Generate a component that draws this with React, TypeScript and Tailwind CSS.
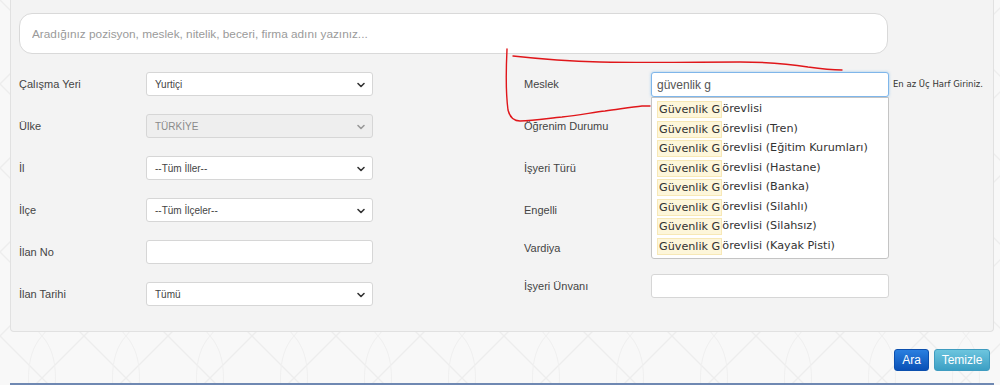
import { ChevronDown } from "lucide-react";

const leftRows = [
  { label: "Çalışma Yeri", value: "Yurtiçi", kind: "select" },
  { label: "Ülke", value: "TÜRKİYE", kind: "disabled" },
  { label: "İl", value: "--Tüm İller--", kind: "select" },
  { label: "İlçe", value: "--Tüm İlçeler--", kind: "select" },
  { label: "İlan No", value: "", kind: "input" },
  { label: "İlan Tarihi", value: "Tümü", kind: "select" },
];

const suggestions = [
  "",
  " (Tren)",
  " (Eğitim Kurumları)",
  " (Hastane)",
  " (Banka)",
  " (Silahlı)",
  " (Silahsız)",
  " (Kayak Pisti)",
];

const Pattern = () => (
  <svg className="absolute inset-0 pointer-events-none" width="1000" height="385">
    <defs>
      <pattern id="lattice" width="84" height="84" patternUnits="userSpaceOnUse">
        <path d="M0 0 L84 84 M84 0 L0 84" stroke="#ededed" strokeWidth="1.4" fill="none" />
        <path d="M42 0 C60 20 60 64 42 84 M42 0 C24 20 24 64 42 84" stroke="#f0f0f0" strokeWidth="1.1" fill="none" />
      </pattern>
    </defs>
    <rect width="1000" height="385" fill="url(#lattice)" />
  </svg>
);

const Select = ({ value, disabled }: { value: string; disabled?: boolean }) => (
  <div
    className={`relative w-[227px] h-[24px] rounded-[3px] border border-[#d6d6d6] flex items-center pl-[8px] text-[10px] ${
      disabled ? "bg-[#eeeeee] text-[#8a8a8a]" : "bg-white text-[#444]"
    }`}
  >
    {value}
    <ChevronDown
      size={12}
      strokeWidth={3.2}
      className={`absolute right-[5px] top-[6px] ${disabled ? "text-[#999]" : "text-[#333]"}`}
    />
  </div>
);

export default function App() {
  return (
    <div className="relative w-[1000px] h-[385px] overflow-hidden bg-[#f8f8f8] font-['Liberation_Sans',Arial,sans-serif]">
      <Pattern />

      {/* Filter panel */}
      <div className="relative ml-[10px] w-[984px] h-[332px] bg-[#f3f3f3] border border-t-0 border-[#e1e1e1] rounded-b-[4px] pl-[8px] pt-[13px]">
        <input
          className="w-[869px] h-[41px] rounded-[13px] border border-[#d9d9d9] bg-white px-[12px] text-[11.8px] placeholder:text-[#9a9a9a] outline-none"
          placeholder="Aradığınız pozisyon, meslek, nitelik, beceri, firma adını yazınız..."
        />

        <div className="flex mt-[18px]">
          {/* Left column */}
          <div className="w-[505px] flex flex-col gap-[18px]">
            {leftRows.map((r) => (
              <div key={r.label} className="flex items-center h-[24px]">
                <span className="w-[127px] text-[11px] text-[#444]">{r.label}</span>
                {r.kind === "input" ? (
                  <div className="w-[227px] h-[24px] rounded-[3px] border border-[#d6d6d6] bg-white" />
                ) : (
                  <Select value={r.value} disabled={r.kind === "disabled"} />
                )}
              </div>
            ))}
          </div>

          {/* Right column */}
          <div className="flex flex-col">
            <div className="relative flex items-center h-[25px]">
              <span className="w-[127px] text-[11px] text-[#444]">Meslek</span>
              <div className="relative">
                <div className="w-[238px] h-[25px] rounded-[3px] border border-[#7fb6ea] shadow-[0_0_3px_rgba(102,175,233,0.6)] bg-white flex items-center pl-[5px] text-[12px] text-[#555]">
                  güvenlik g
                </div>
                <ul className="absolute left-0 top-full z-10 w-[238px] bg-white border border-[#c4c4c4] rounded-b-[3px] py-[2px] font-['DejaVu_Sans',Verdana,sans-serif] text-[11.2px] text-[#333]">
                  {suggestions.map((s, i) => (
                    <li key={i} className="h-[19.5px] flex items-center pl-[5px] whitespace-nowrap">
                      <span className="bg-[#fdf6da] border border-[#f7e8b6] px-px leading-[15px]">Güvenlik G</span>
                      <span>örevlisi{s}</span>
                    </li>
                  ))}
                </ul>
              </div>
              <span className="ml-[4px] font-['DejaVu_Sans',Verdana,sans-serif] text-[8.5px] text-[#333]">
                En az Üç Harf Giriniz.
              </span>
            </div>
            <div className="flex items-center h-[24px] mt-[17px]">
              <span className="w-[127px] text-[11px] text-[#444]">Öğrenim Durumu</span>
            </div>
            <div className="flex items-center h-[24px] mt-[18px]">
              <span className="w-[127px] text-[11px] text-[#444]">İşyeri Türü</span>
            </div>
            <div className="flex items-center h-[24px] mt-[18px]">
              <span className="w-[127px] text-[11px] text-[#444]">Engelli</span>
            </div>
            <div className="flex items-center h-[24px] mt-[14px]">
              <span className="w-[127px] text-[11px] text-[#444]">Vardiya</span>
            </div>
            <div className="flex items-center h-[24px] mt-[14px]">
              <span className="w-[127px] text-[11px] text-[#444]">İşyeri Ünvanı</span>
              <div className="w-[238px] h-[24px] rounded-[3px] border border-[#d6d6d6] bg-white" />
            </div>
          </div>
        </div>
      </div>

      {/* Buttons */}
      <div className="relative flex justify-end gap-[5px] mt-[17px] pr-[10px]">
        <button className="w-[35px] h-[22px] rounded-[3px] border border-[#0b4fae] bg-gradient-to-b from-[#2a7fe0] to-[#0a50b6] text-white text-[12px]">
          Ara
        </button>
        <button className="w-[56px] h-[22px] rounded-[3px] border border-[#3f9cc0] bg-gradient-to-b from-[#6cc5de] to-[#3b9fc4] text-white text-[12px]">
          Temizle
        </button>
      </div>

      <div className="relative ml-[10px] w-[984px] h-[2px] mt-[12px] bg-[#6f88b2]" />

      {/* Hand-drawn annotation */}
      <svg className="absolute inset-0 pointer-events-none" width="1000" height="385">
        <path
          d="M507 49 C506 70 506 95 508 110 C510 118 514 121 520 121 C535 121 550 118 562 117 C580 115 595 112 605 111 C620 109 632 107 642 106 L650 106"
          stroke="#e0161a"
          strokeWidth="1.4"
          fill="none"
          strokeLinecap="round"
        />
        <path
          d="M513 56 C540 59 560 61 600 62 C650 63 700 62 740 62 C770 62 790 64 808 67 C822 69 832 70 842 70"
          stroke="#e0161a"
          strokeWidth="1.4"
          fill="none"
          strokeLinecap="round"
        />
      </svg>
    </div>
  );
}
